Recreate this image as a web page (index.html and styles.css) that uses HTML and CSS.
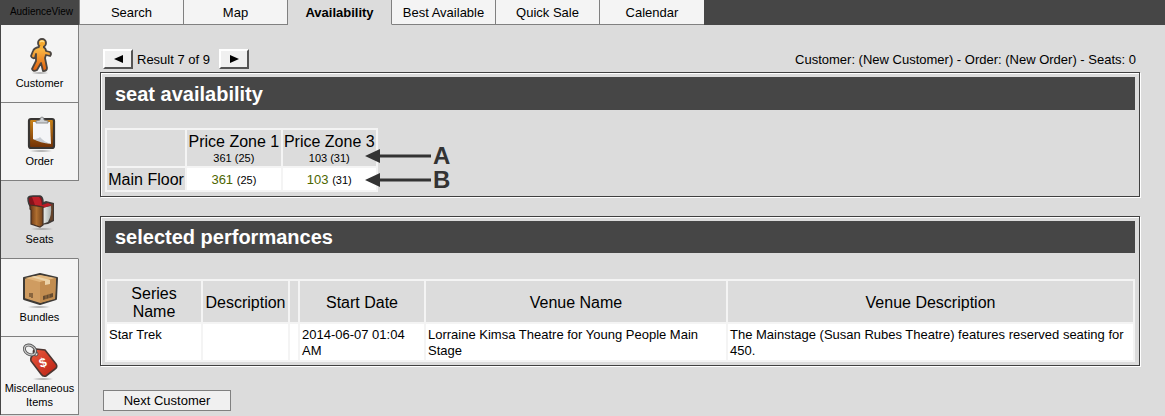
FILE: index.html
```html
<!DOCTYPE html>
<html lang="en">
<head>
    <meta charset="UTF-8">
    <meta name="viewport" content="width=device-width, initial-scale=1.0">
    <title>AudienceView - Availability</title>
    <link rel="stylesheet" href="styles.css">
</head>
<body>
    <!-- Top Bar -->
    <header class="top-bar">
        <div class="brand">AudienceView</div>
        <nav class="tabs">
            <a href="#">Search</a>
            <a href="#">Map</a>
            <a href="#" class="active">Availability</a>
            <a href="#">Best Available</a>
            <a href="#">Quick Sale</a>
            <a href="#">Calendar</a>
        </nav>
    </header>

    <div class="layout">
        <!-- Side Menu -->
        <nav class="side-menu">
            <a href="#">
                <svg width="36" height="38" viewBox="0 0 36 38">
                    <defs>
                        <linearGradient id="orange" x1="0" y1="0" x2="0" y2="1">
                            <stop offset="0" stop-color="#fdc04a"/>
                            <stop offset="1" stop-color="#dd5c0c"/>
                        </linearGradient>
                        <radialGradient id="shade">
                            <stop offset="0" stop-color="#999"/>
                            <stop offset="1" stop-color="#999" stop-opacity="0"/>
                        </radialGradient>
                    </defs>
                    <ellipse cx="18" cy="36" rx="9" ry="1.500" fill="url(#shade)"/>
                    <path d="M17 10 L21 10 Q24 11 24 14 L28 15 Q30 17 28 19 L24 18 L23 21 L25 31 Q25 34 21 34 L19 26 L15 33 Q11 35 10 32 L14 24 L14 17 L13 21 Q10 22 9 19 L11 14 Q12 11 17 10Z" fill="url(#orange)" stroke="#4b4540" stroke-width="1.800" stroke-linejoin="round"/>
                    <circle cx="20" cy="6" r="4" fill="#f6a92e" stroke="#4b4540" stroke-width="1.800"/>
                    <path d="M18 9 L21 9 L21 12 L17 12Z" fill="#f8b038"/>
                    <path d="M18 5 Q20 3 22 5" fill="none" stroke="#ffe08c" stroke-width="1.500"/>
                </svg>
                <span>Customer</span>
            </a>
            <a href="#">
                <svg width="36" height="38" viewBox="0 0 36 38">
                    <defs>
                        <linearGradient id="board" x1="0" y1="0" x2="0" y2="1">
                            <stop offset="0" stop-color="#cc8519"/>
                            <stop offset="1" stop-color="#703006"/>
                        </linearGradient>
                    </defs>
                    <ellipse cx="19" cy="36" rx="12" ry="1.500" fill="url(#shade)"/>
                    <rect x="7" y="4" width="25" height="29" rx="2" fill="url(#board)" stroke="#383533" stroke-width="2.200"/>
                    <path d="M11 7 L28 7 L29 29 L11 24Z" fill="#f4f5f7"/>
                    <path d="M11 24 Q16 24 18 22 Q22 27 29 29 Q18 28 11 24Z" fill="#c7cbd1"/>
                    <path d="M14 8 L14 6 L18 5 Q18 2 20 2 Q22 2 22 5 L26 6 L26 8Z" fill="#cfd2d5" stroke="#777" stroke-width=".8"/>
                </svg>
                <span>Order</span>
            </a>
            <a href="#" class="active">
                <svg width="36" height="38" viewBox="0 0 36 38">
                    <defs>
                        <linearGradient id="wood" x1="0" y1="0" x2="1" y2="0">
                            <stop offset="0" stop-color="#653415"/>
                            <stop offset=".5" stop-color="#b06f30"/>
                            <stop offset="1" stop-color="#70401a"/>
                        </linearGradient>
                        <linearGradient id="cushion" x1="0" y1="0" x2="1" y2="0">
                            <stop offset="0" stop-color="#f2f5f3"/>
                            <stop offset="1" stop-color="#a9b0ad"/>
                        </linearGradient>
                    </defs>
                    <ellipse cx="20" cy="36" rx="12" ry="1.500" fill="url(#shade)"/>
                    <path d="M19 10 L24 8 L32 10 L32 28 L26 31 L19 32Z" fill="#3f3a37"/>
                    <path d="M28 12 L31 11 L31 27 L28 28Z" fill="#63422a"/>
                    <path d="M20 15 L29 13 Q30 22 26 29 L20 31Z" fill="url(#cushion)"/>
                    <path d="M6 5 Q7 3 11 3 L18 3 Q21 4 21 9 L21 14 L9 14 Q6 11 6 5Z" fill="#86131a" stroke="#3a3a3a" stroke-width="1.500"/>
                    <path d="M10 4 L17 4 Q19 6 20 13 L13 12Z" fill="#c02029"/>
                    <path d="M17 13 L26 10 L30 12 L21 15Z" fill="#bd1c26"/>
                    <path d="M8 12 L21 14 L21 32 L18 34 L9 31 L9 17 L8 16Z" fill="url(#wood)" stroke="#443126" stroke-width="1.200"/>
                </svg>
                <span>Seats</span>
            </a>
            <a href="#">
                <svg width="36" height="38" viewBox="0 0 36 38">
                    <ellipse cx="17" cy="36" rx="12" ry="1.500" fill="url(#shade)"/>
                    <path d="M2 7 L18 3 L35 7 L34 28 L18 33 L2 28Z" fill="#cf9c61" stroke="#3d3a36" stroke-width="2" stroke-linejoin="round"/>
                    <path d="M3 7 L18 4 L34 7 L18 11Z" fill="#e2b77e"/>
                    <path d="M18 11 L34 7 L33 28 L18 32Z" fill="#c28d50"/>
                    <path d="M9 6 L13 5 L28 9 L28 13 L23 14 L23 10Z" fill="#ecd3a8"/>
                    <path d="M8 22 L8 26 M10 22 L10 27" stroke="#5b4228" stroke-width="1.200"/>
                    <path d="M21 25 L31 22 L31 26 L21 29Z" fill="#654b30"/>
                    <path d="M24 23 L24 29 M27 22 L27 28" stroke="#b9864c" stroke-width=".6"/>
                </svg>
                <span>Bundles</span>
            </a>
            <a href="#" class="two-lines">
                <svg width="36" height="38" viewBox="0 0 36 38">
                    <defs>
                        <linearGradient id="tag" x1="0" y1="0" x2="1" y2="1">
                            <stop offset="0" stop-color="#ea5a3d"/>
                            <stop offset="1" stop-color="#ba2013"/>
                        </linearGradient>
                    </defs>
                    <ellipse cx="21" cy="36" rx="11" ry="1.500" fill="url(#shade)"/>
                    <path d="M12 11 Q10 7 14 6 L23 7 L34 21 Q36 24 33 26 L24 33 Q21 34 19 31 L9 18 Q8 14 12 11Z" fill="url(#tag)" stroke="#4c3632" stroke-width="1.600"/>
                    <circle cx="14" cy="11" r="2" fill="#f3f3f3" stroke="#5b4540"/>
                    <ellipse cx="8" cy="7" rx="6" ry="4.500" transform="rotate(32 8 7)" fill="none" stroke="#555" stroke-width="3"/>
                    <ellipse cx="8" cy="7" rx="6" ry="4.500" transform="rotate(32 8 7)" fill="none" stroke="#c9c9c9" stroke-width="1.200"/>
                    <text x="21" y="24" class="dollar" transform="rotate(-18 21 20)">$</text>
                </svg>
                <span>Miscellaneous Items</span>
            </a>
        </nav>

        <!-- Main Content -->
        <main class="content">
            <div class="result-bar">
                <div class="pager">
                    <button type="button" aria-label="Previous result">
                        <svg width="9" height="8" viewBox="0 0 9 8"><path d="M0 4 L9 0 L9 8Z"/></svg>
                    </button>
                    <span>Result 7 of 9</span>
                    <button type="button" aria-label="Next result">
                        <svg width="9" height="8" viewBox="0 0 9 8"><path d="M9 4 L0 0 L0 8Z"/></svg>
                    </button>
                </div>
                <div class="order-info">Customer: (New Customer) - Order: (New Order) - Seats: 0</div>
            </div>

            <section class="panel availability">
                <h2>seat availability</h2>
                <div class="seat-map">
                    <table class="grid seats">
                        <tr>
                            <th></th>
                            <th>Price Zone 1<small>361 (25)</small></th>
                            <th>Price Zone 3<small>103 (31)</small></th>
                        </tr>
                        <tr>
                            <th>Main Floor</th>
                            <td><a href="#">361</a> <small>(25)</small></td>
                            <td><a href="#">103</a> <small>(31)</small></td>
                        </tr>
                    </table>
                    <!-- Callouts over the table -->
                    <div class="callouts">
                        <div class="callout">
                            <svg width="66" height="16" viewBox="0 0 66 16"><path d="M0 8 L15 1 L15 6.500 L66 6.500 L66 9.500 L15 9.500 L15 15Z"/></svg>
                            <b>A</b>
                        </div>
                        <div class="callout">
                            <svg width="66" height="16" viewBox="0 0 66 16"><path d="M0 8 L15 1 L15 6.500 L66 6.500 L66 9.500 L15 9.500 L15 15Z"/></svg>
                            <b>B</b>
                        </div>
                    </div>
                </div>
            </section>

            <section class="panel performances">
                <h2>selected performances</h2>
                <table class="grid shows">
                    <colgroup>
                        <col class="col-series">
                        <col class="col-description">
                        <col class="col-blank">
                        <col class="col-date">
                        <col class="col-venue">
                        <col>
                    </colgroup>
                    <tr>
                        <th>Series Name</th>
                        <th>Description</th>
                        <th></th>
                        <th>Start Date</th>
                        <th>Venue Name</th>
                        <th>Venue Description</th>
                    </tr>
                    <tr>
                        <td>Star Trek</td>
                        <td></td>
                        <td></td>
                        <td>2014-06-07 01:04 AM</td>
                        <td>Lorraine Kimsa Theatre for Young People Main Stage</td>
                        <td>The Mainstage (Susan Rubes Theatre) features reserved seating for 450.</td>
                    </tr>
                </table>
            </section>

            <button type="button" class="next-customer">Next Customer</button>
        </main>
    </div>
</body>
</html>
```

FILE: styles.css
```css
* {
    box-sizing: border-box;
}

body {
    margin: 0;
    background: #dcdcdc;
    color: #000;
    font-family: "Liberation Sans", Arial, sans-serif;
    font-size: 13px;
    line-height: 16px;
}

a {
    color: #000;
    text-decoration: none;
}

/* Top Bar */
.top-bar {
    display: flex;
    height: 25px;
    background: #464646;
}

.brand {
    width: 79px;
    padding-left: 4px;
    font-size: 10px;
    line-height: 24px;
    text-align: center;
}

.tabs {
    display: flex;
}

.tabs a {
    width: 104px;
    background: #f4f4f4;
    border-right: 1px solid #808080;
    border-bottom: 1px solid #808080;
    line-height: 26px;
    text-align: center;
}

.tabs a:first-child {
    width: 105px;
    border-left: 1px solid #808080;
}

.tabs a:last-child {
    border-right: none;
}

.tabs a.active {
    background: #dcdcdc;
    border-bottom-color: #dcdcdc;
    font-weight: bold;
}

.layout {
    display: flex;
}

/* Side Menu */
.side-menu {
    flex: none;
    width: 79px;
    border-left: 1px solid #464646;
}

.side-menu a {
    display: flex;
    flex-direction: column;
    align-items: center;
    height: 78px;
    padding-top: 12px;
    background: #f4f4f4;
    border-right: 1px solid #808080;
    border-bottom: 1px solid #808080;
    font-size: 11px;
    line-height: 14px;
    text-align: center;
}

.side-menu a.active {
    background: #dcdcdc;
    border-right-color: #dcdcdc;
}

.side-menu svg {
    display: block;
    flex: none;
    margin-bottom: 1px;
}

.side-menu .two-lines {
    padding-top: 6px;
}

.side-menu .two-lines svg {
    margin-bottom: 0;
}

.dollar {
    fill: #fff;
    font-size: 13px;
    font-weight: bold;
    text-anchor: middle;
}

/* Main Content */
.content {
    flex: 1;
    padding: 24px 25px 4px 21px;
}

.result-bar {
    display: flex;
    justify-content: space-between;
    padding: 0 4px 0 3px;
    margin-bottom: 3px;
    line-height: 21px;
    height: 20px;
}

.pager {
    display: flex;
    gap: 4px;
}

.pager span {
    width: 78px;
}

.pager button {
    display: flex;
    align-items: center;
    justify-content: center;
    width: 30px;
    height: 20px;
    padding: 0;
    background: #f0f0f0;
    border: 2px solid;
    border-color: #fff #555 #555 #fff;
}

.panel {
    margin-bottom: 19px;
    padding: 4px;
    border: 1px solid #404040;
    box-shadow: 1px 1px #fff, inset 1px 1px #fff;
}

.panel h2 {
    margin: 0 0 18px;
    padding: 1px 0 0 10px;
    background: #464646;
    color: #fff;
    font-size: 20px;
    line-height: 32px;
}

.performances {
    margin-bottom: 24px;
    padding-bottom: 3px;
}

.performances h2 {
    margin-bottom: 26px;
    padding-top: 0;
}

/* Tables */
.grid {
    border-spacing: 2px;
    background: #f4f4f4;
}

.grid th {
    padding: 3px 2px 1px;
    background: #dcdcdc;
    font-size: 16px;
    font-weight: normal;
    line-height: 18px;
}

.grid td {
    padding: 3px 2px 1px;
    background: #fff;
    vertical-align: top;
}

.grid small {
    font-size: 11px;
}

.seat-map {
    position: relative;
}

.seats {
    width: 273px;
}

.seats th {
    height: 22px;
    padding-left: 1px;
    padding-right: 1px;
}

.seats th small {
    display: block;
    line-height: 14px;
}

.seats td {
    padding-top: 2px;
    text-align: center;
    vertical-align: middle;
}

.seats td a {
    color: #4d6600;
}

.callouts {
    position: absolute;
    top: 16px;
    left: 260px;
}

.callout {
    display: flex;
    align-items: center;
    gap: 2px;
    height: 24px;
    color: #333;
    font-size: 24px;
    line-height: 24px;
}

.callout svg {
    fill: #333;
}

.shows {
    width: 100%;
    table-layout: fixed;
}

.shows th {
    height: 41px;
}

.shows td {
    height: 36px;
}

.col-series {
    width: 94px;
}

.col-description {
    width: 85px;
}

.col-blank {
    width: 8px;
}

.col-date {
    width: 124px;
}

.col-venue {
    width: 300px;
}

.next-customer {
    width: 128px;
    height: 21px;
    margin-left: 3px;
    padding: 0;
    background: #f0f0f0;
    border: 1px solid #808080;
    font-family: inherit;
    font-size: 13px;
}
```
